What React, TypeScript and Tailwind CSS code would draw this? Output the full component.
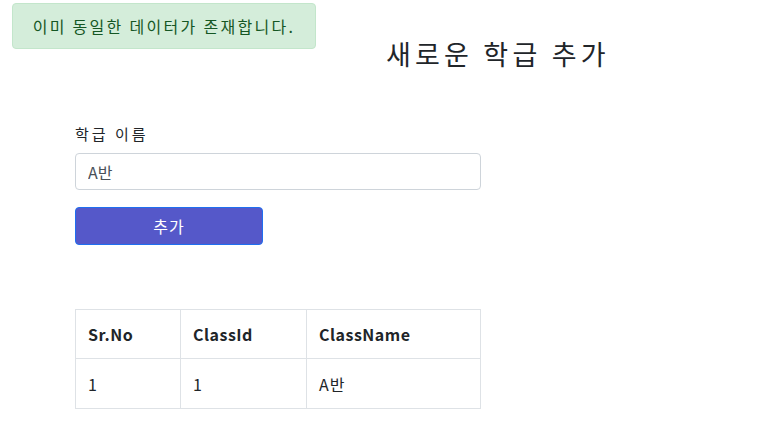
const rows = [{ srNo: 1, classId: 1, className: 'A반' }];

export default function App() {
  return (
    <div className="relative min-h-[443px] bg-white font-['Noto_Sans_CJK_KR','Noto_Sans',sans-serif] text-[#212529]">
      <div className="absolute left-[12px] top-[3px] flex h-[46px] w-[304px] items-center justify-center rounded-[4px] border border-[#c3e6cb] bg-[#d4edda] text-[16px] tracking-[2.3px] text-[#155724]">
        이미 동일한 데이터가 존재합니다.
      </div>

      <div className="px-[75px] pt-[34px]">
        <h2 className="ml-[311px] text-[27px] leading-[40px] tracking-[4.2px] text-[#212529]">
          새로운 학급 추가
        </h2>

        <form className="mt-[47px] flex w-[406px] flex-col">
          <label className="text-[15px] leading-[26px] tracking-[3px] text-[#212529]">
            학급 이름
          </label>
          <input
            className="mt-[6px] h-[37px] rounded-[4px] border border-[#ced4da] px-[12px] text-[16px] text-[#495057] outline-none"
            defaultValue="A반"
          />
          <button
            className="mt-[17px] h-[38px] w-[188px] rounded-[4px] border border-[#1f6ff0] bg-[#5558c9] text-[16px] tracking-[1px] text-white"
            type="button"
          >
            추가
          </button>
        </form>

        <table className="mt-[64px] w-[406px] border-collapse text-[16px]">
          <thead>
            <tr className="h-[49px]">
              <th className="w-[105px] border border-[#dee2e6] px-[12px] text-left font-bold tracking-[0.5px]">
                Sr.No
              </th>
              <th className="w-[126px] border border-[#dee2e6] px-[12px] text-left font-bold tracking-[0.5px]">
                ClassId
              </th>
              <th className="border border-[#dee2e6] px-[12px] text-left font-bold tracking-[0.5px]">
                ClassName
              </th>
            </tr>
          </thead>
          <tbody>
            {rows.map((row) => (
              <tr className="h-[50px]" key={row.srNo}>
                <td className="border border-[#dee2e6] px-[12px]">{row.srNo}</td>
                <td className="border border-[#dee2e6] px-[12px]">{row.classId}</td>
                <td className="border border-[#dee2e6] px-[12px] tracking-[1px]">{row.className}</td>
              </tr>
            ))}
          </tbody>
        </table>
      </div>
    </div>
  );
}
